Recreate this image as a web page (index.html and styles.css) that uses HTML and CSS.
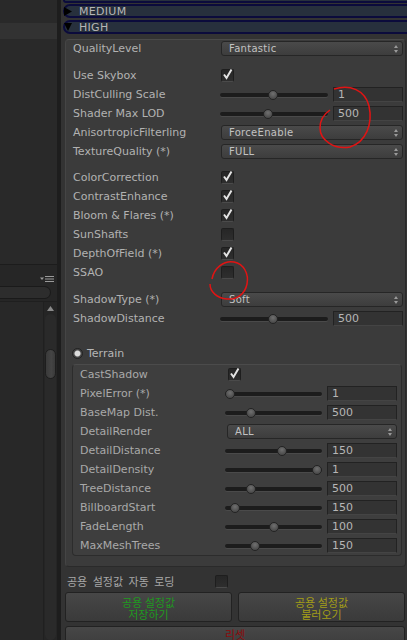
FILE: index.html
```html
<!DOCTYPE html>
<html>
<head>
<meta charset="utf-8">
<link rel="stylesheet" href="styles.css">
</head>
<body>
<div class="app">
  <aside class="left">
    <div class="hier"><div class="hier-sel"></div></div>
    <div class="proj-bar">
      <svg class="menu-ico" width="14" height="7" viewBox="0 0 14 7"><path d="M0 1.5h4L2 4z" fill="#9a9a9a"/><rect x="5" y="0" width="9" height="1" fill="#9a9a9a"/><rect x="5" y="2.5" width="9" height="1" fill="#9a9a9a"/><rect x="5" y="5" width="9" height="1" fill="#9a9a9a"/></svg>
    </div>
    <div class="proj-search"><div class="search"></div></div>
    <div class="proj-list">
      <div class="list"></div>
      <div class="scroll">
        <div class="scroll-up"><svg width="7" height="5" viewBox="0 0 7 5"><path d="M0 5L3.5 0L7 5z" fill="#8a8a8a"/></svg></div>
        <div class="groove"><div class="thumb"></div></div>
      </div>
    </div>
  </aside>
  <div class="split"></div>
  <main class="right">
    <div class="fold-prev"></div>
    <div class="fold"><svg class="tri" width="8" height="9" viewBox="0 0 8 9"><path d="M0 0L8 4.5L0 9z" fill="#000"/></svg><span>MEDIUM</span></div>
    <div class="fold fold-open"><svg class="tri" width="8" height="8" viewBox="0 0 8 8"><path d="M0 0H8L4 8z" fill="#000"/></svg><span>HIGH</span></div>

    <section class="box">
      <div class="row first"><span class="lbl">QualityLevel</span><div class="popup">Fantastic<svg class="pa" width="4" height="8" viewBox="0 0 4 8"><path d="M0 3L2 0L4 3zM0 5L2 8L4 5z" fill="#9a9a9a"/></svg></div></div>

      <div class="group g2">
        <div class="row"><span class="lbl">Use Skybox</span><span class="cb"><svg width="13" height="13" viewBox="0 0 13 13"><path d="M3 6.5L5.5 10L10.5 1.5" fill="none" stroke="#e4e4e4" stroke-width="2"/></svg></span></div>
        <div class="row"><span class="lbl">DistCulling Scale</span><div class="slider"><div class="track"><span class="knob" style="left:calc(0.49 * (100% - 10px))"></span></div><span class="field">1</span></div></div>
        <div class="row"><span class="lbl">Shader Max LOD</span><div class="slider"><div class="track"><span class="knob" style="left:calc(0.44 * (100% - 10px))"></span></div><span class="field">500</span></div></div>
        <div class="row"><span class="lbl">AnisortropicFilterling</span><div class="popup">ForceEnable<svg class="pa" width="4" height="8" viewBox="0 0 4 8"><path d="M0 3L2 0L4 3zM0 5L2 8L4 5z" fill="#9a9a9a"/></svg></div></div>
        <div class="row"><span class="lbl">TextureQuality (*)</span><div class="popup">FULL<svg class="pa" width="4" height="8" viewBox="0 0 4 8"><path d="M0 3L2 0L4 3zM0 5L2 8L4 5z" fill="#9a9a9a"/></svg></div></div>
      </div>

      <div class="group g3">
        <div class="row"><span class="lbl">ColorCorrection</span><span class="cb"><svg width="13" height="13" viewBox="0 0 13 13"><path d="M3 6.5L5.5 10L10.5 1.5" fill="none" stroke="#e4e4e4" stroke-width="2"/></svg></span></div>
        <div class="row"><span class="lbl">ContrastEnhance</span><span class="cb"><svg width="13" height="13" viewBox="0 0 13 13"><path d="M3 6.5L5.5 10L10.5 1.5" fill="none" stroke="#e4e4e4" stroke-width="2"/></svg></span></div>
        <div class="row"><span class="lbl">Bloom &amp; Flares (*)</span><span class="cb"><svg width="13" height="13" viewBox="0 0 13 13"><path d="M3 6.5L5.5 10L10.5 1.5" fill="none" stroke="#e4e4e4" stroke-width="2"/></svg></span></div>
        <div class="row"><span class="lbl">SunShafts</span><span class="cb"></span></div>
        <div class="row"><span class="lbl">DepthOfField (*)</span><span class="cb"><svg width="13" height="13" viewBox="0 0 13 13"><path d="M3 6.5L5.5 10L10.5 1.5" fill="none" stroke="#e4e4e4" stroke-width="2"/></svg></span></div>
        <div class="row"><span class="lbl">SSAO</span><span class="cb"></span></div>
      </div>

      <div class="group">
        <div class="row"><span class="lbl">ShadowType (*)</span><div class="popup">Soft<svg class="pa" width="4" height="8" viewBox="0 0 4 8"><path d="M0 3L2 0L4 3zM0 5L2 8L4 5z" fill="#9a9a9a"/></svg></div></div>
        <div class="row"><span class="lbl">ShadowDistance</span><div class="slider"><div class="track"><span class="knob" style="left:calc(0.49 * (100% - 10px))"></span></div><span class="field">500</span></div></div>
      </div>

      <div class="terrain-head"><span class="radio"></span><span>Terrain</span></div>

      <div class="inner">
        <div class="row"><span class="lbl">CastShadow</span><span class="cb cb-in"><svg width="13" height="13" viewBox="0 0 13 13"><path d="M3 6.5L5.5 10L10.5 1.5" fill="none" stroke="#e4e4e4" stroke-width="2"/></svg></span></div>
        <div class="row"><span class="lbl">PixelError (*)</span><div class="slider"><div class="track"><span class="knob" style="left:calc(0 * (100% - 10px))"></span></div><span class="field">1</span></div></div>
        <div class="row"><span class="lbl">BaseMap Dist.</span><div class="slider"><div class="track"><span class="knob" style="left:calc(0.245 * (100% - 10px))"></span></div><span class="field">500</span></div></div>
        <div class="row"><span class="lbl">DetailRender</span><div class="popup popup-in">ALL<svg class="pa" width="4" height="8" viewBox="0 0 4 8"><path d="M0 3L2 0L4 3zM0 5L2 8L4 5z" fill="#9a9a9a"/></svg></div></div>
        <div class="row"><span class="lbl">DetailDistance</span><div class="slider"><div class="track"><span class="knob" style="left:calc(0.6 * (100% - 10px))"></span></div><span class="field">150</span></div></div>
        <div class="row"><span class="lbl">DetailDensity</span><div class="slider"><div class="track"><span class="knob" style="left:calc(1 * (100% - 10px))"></span></div><span class="field">1</span></div></div>
        <div class="row"><span class="lbl">TreeDistance</span><div class="slider"><div class="track"><span class="knob" style="left:calc(0.245 * (100% - 10px))"></span></div><span class="field">500</span></div></div>
        <div class="row"><span class="lbl">BillboardStart</span><div class="slider"><div class="track"><span class="knob" style="left:calc(0.06 * (100% - 10px))"></span></div><span class="field">150</span></div></div>
        <div class="row"><span class="lbl">FadeLength</span><div class="slider"><div class="track"><span class="knob" style="left:calc(0.5 * (100% - 10px))"></span></div><span class="field">100</span></div></div>
        <div class="row"><span class="lbl">MaxMeshTrees</span><div class="slider"><div class="track"><span class="knob" style="left:calc(0.29 * (100% - 10px))"></span></div><span class="field">150</span></div></div>
      </div>
    </section>

    <div class="auto-row"><span class="kr-lbl">공용 설정값 자동 로딩</span><span class="cb"></span></div>
    <div class="btns">
      <div class="btn green"><span class="bl">공용 설정값</span><span class="bl">저장하기</span></div>
      <div class="btn yellow"><span class="bl">공용 설정값</span><span class="bl">불러오기</span></div>
    </div>
    <div class="btn reset"><span class="bl">리셋</span></div>
  </main>

  <svg class="annot" width="407" height="640" viewBox="0 0 407 640">
    <path d="M334 89C350 84 365 90 369 106C373 124 366 142 350 147C334 150 320 140 320 128C320 120 324 114 330 110" fill="none" stroke="#e01414" stroke-width="1.5"/>
    <path d="M212 279C214 268 224 260 234 262C244 264 249 274 247 284C245 294 237 300 227 299C217 298 210 292 210 284" fill="none" stroke="#e01414" stroke-width="1.5"/>
  </svg>
</div>
</body>
</html>
```
FILE: styles.css
```css
* { box-sizing: border-box; }
html, body { margin: 0; padding: 0; }
body {
  width: 407px;
  height: 640px;
  overflow: hidden;
  background: #282828;
  font-family: "DejaVu Sans", "Noto Sans CJK KR", sans-serif;
  font-size: 11px;
  color: #b2b2b2;
}
.app {
  position: relative;
  display: flex;
  width: 407px;
  height: 640px;
}

/* left column */
.left {
  width: 57px;
  flex: none;
  display: flex;
  flex-direction: column;
  background: #282828;
}
.hier {
  height: 264px;
  padding-top: 23px;
  background: #292929;
}
.hier-sel {
  height: 16px;
  background: #323232;
}
.proj-bar {
  height: 22px;
  background: #262626;
  border-top: 1px solid #1c1c1c;
  display: flex;
  align-items: flex-end;
  justify-content: flex-end;
  padding: 0 3px 3px 0;
}
.proj-search {
  height: 15px;
  padding-right: 6px;
  background: #262626;
}
.search {
  height: 13px;
  background: #2d2d2d;
  border: 1px solid #1a1a1a;
  border-left: none;
  border-radius: 0 7px 7px 0;
}
.proj-list {
  flex: 1;
  display: flex;
  background: #282828;
  border-top: 1px solid #1f1f1f;
}
.list { flex: 1; }
.scroll {
  width: 14px;
  display: flex;
  flex-direction: column;
  background: #252525;
  border-left: 1px solid #202020;
}
.scroll-up {
  height: 12px;
  display: flex;
  justify-content: center;
  align-items: center;
}
.groove {
  flex: 1;
  padding-top: 35px;
  margin: 0 1px;
  background: #2a2a2a;
  border-radius: 6px;
}
.thumb {
  height: 30px;
  background: linear-gradient(90deg, #3a3a3a, #444 60%, #3a3a3a);
  border: 1px solid #1e1e1e;
  border-radius: 6px;
}
.split {
  width: 4px;
  flex: none;
  background: #1d1d1d;
}

/* right column */
.right {
  flex: 1;
  min-width: 0;
  background: #333333;
  display: flex;
  flex-direction: column;
}
.fold-prev {
  height: 3px;
  flex: none;
  margin: 0 -10px 0 2px;
  background: #27303d;
  border: 2px solid #0b0b3c;
  border-top: none;
  border-radius: 0 0 6px 6px;
}
.fold {
  height: 14px;
  flex: none;
  margin: 1px -10px 0 2px;
  background: #27303d;
  border: 2px solid #0b0b3c;
  border-radius: 7px;
  display: flex;
  align-items: center;
  color: #b6b6b6;
  font-size: 11px;
  letter-spacing: 0.3px;
  padding-top: 1px;
}
.fold-open { margin-top: 2px; }
.fold .tri { margin: -1px 7px 0 -1px; flex: none; }

.box {
  margin: 5px 1px 0 4px;
  background: #3b3b3b;
  border: 1px solid #2a2a2a;
  border-top-color: #4a4a4a;
  border-left-color: #454545;
  border-radius: 4px;
  padding: 0 0 10px;
}
.row {
  height: 19px;
  display: grid;
  grid-template-columns: 148px 1fr;
  align-items: center;
  padding: 0 2px 0 7px;
  white-space: nowrap;
}
.row.first { height: 17px; }
.group { margin-top: 8px; }
.group.g2 { margin-top: 9px; }
.group.g3 { margin-top: 7px; }
.lbl { color: #b2b2b2; }

.popup {
  position: relative;
  height: 15px;
  border: 1px solid #262626;
  border-radius: 3px;
  background: linear-gradient(#4a4a4a, #3d3d3d);
  font-size: 10px;
  color: #c2c2c2;
  padding-left: 7px;
  line-height: 13px;
  letter-spacing: 0.3px;
}
.pa { position: absolute; right: 4px; top: 3px; }

.cb {
  width: 13px;
  height: 13px;
  border-radius: 2px;
  background: linear-gradient(#262626, #2e2e2e);
  border: 1px solid #1e1e1e;
  border-bottom-color: #4a4a4a;
  position: relative;
  display: block;
}
.cb svg { position: absolute; left: -1px; top: -2px; }

.slider {
  display: grid;
  grid-template-columns: 1fr 70px;
  column-gap: 5px;
  align-items: center;
  margin-left: -1px;
}
.track {
  position: relative;
  height: 4px;
  border-radius: 2px;
  background: #1c1c1c;
  box-shadow: 0 1px 0 #4a4a4a;
}
.knob {
  position: absolute;
  top: -3px;
  width: 10px;
  height: 10px;
  border-radius: 50%;
  background: radial-gradient(circle at 50% 35%, #707070, #4c4c4c 70%);
  border: 1px solid #232323;
}
.field {
  height: 15px;
  background: #333333;
  border: 1px solid #222222;
  border-bottom-color: #444;
  color: #b6b6b6;
  padding-left: 4px;
  line-height: 13px;
}

.terrain-head {
  margin-top: 16px;
  height: 19px;
  display: flex;
  align-items: center;
  padding-left: 6px;
  color: #b6b6b6;
}
.radio {
  width: 11px;
  height: 11px;
  border-radius: 50%;
  border: 1px solid #222;
  background: radial-gradient(circle, #dcdcdc 0 2.5px, #4a4a4a 3.5px, #3a3a3a);
  margin-right: 4px;
}
.inner {
  margin: 1px 3px 0 6px;
  background: #3e3e3e;
  border: 1px solid #2c2c2c;
  border-top-color: #4b4b4b;
  border-radius: 4px;
}
.inner .row {
  grid-template-columns: 146px 1fr;
  padding: 0 4px 0 7px;
}
.inner .lbl { color: #a9a9a9; }
.cb-in { margin-left: 2px; }
.popup-in { margin-left: 1px; }

.auto-row {
  height: 18px;
  flex: none;
  margin-top: 5px;
  display: grid;
  grid-template-columns: 148px 1fr;
  align-items: center;
  padding-left: 6px;
}
.kr-lbl {
  font-family: "Noto Sans CJK KR", sans-serif;
  font-size: 11px;
  color: #a8a8a8;
  word-spacing: 3px;
}
.btns {
  display: grid;
  flex: none;
  grid-template-columns: 1fr 1fr;
  column-gap: 6px;
  margin: 2px 2px 0 4px;
}
.btn {
  height: 30px;
  flex: none;
  border: 1px solid #222;
  border-radius: 3px;
  background: linear-gradient(#474747, #3a3a3a);
  font-family: "Noto Sans CJK KR", sans-serif;
  font-size: 11px;
  text-align: center;
  padding-top: 3px;
  display: flex;
  flex-direction: column;
  align-items: center;
}
.bl {
  display: block;
  height: 12px;
  line-height: 12px;
}
.green { color: #1f9a1f; }
.yellow { color: #a39d17; }
.reset {
  margin: 4px 2px 0 4px;
  height: 24px;
  color: #8c0a0a;
  padding-top: 1px;
}

.annot {
  position: absolute;
  left: 0;
  top: 0;
  pointer-events: none;
}
```
